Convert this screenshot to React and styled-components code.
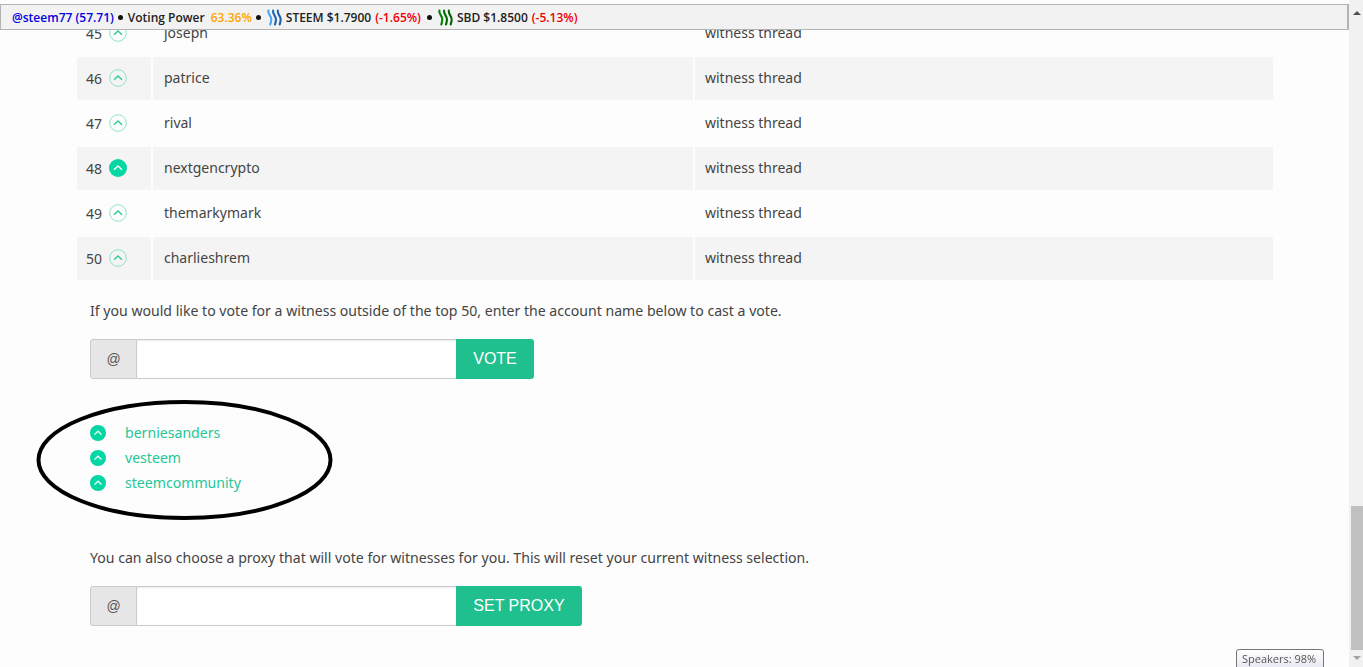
import React from 'react';
import styled, { createGlobalStyle } from 'styled-components';

const GlobalStyle = createGlobalStyle`
  html, body {
    margin: 0;
    padding: 0;
    height: 100%;
    overflow: hidden;
    background: #fdfdfd;
  }
  body {
    font-family: 'Noto Sans', 'Open Sans', Arial, sans-serif;
    color: #444;
  }
`;

const Page = styled.div`
  width: 1349px;
  height: 667px;
  overflow: hidden;
  padding-top: 10px;
  box-sizing: border-box;
`;

const Table = styled.table`
  margin-left: 75px;
  width: 1200px;
  border-collapse: separate;
  border-spacing: 2px;
  table-layout: fixed;
  font-size: 14px;
`;

const Row = styled.tr`
  background: none;
`;

const Cell = styled.td`
  height: 43px;
  padding: 0 0 3px 10px;
  box-sizing: border-box;
  background: ${p => (p.$odd ? '#f4f4f4' : 'transparent')};
`;

const RankCell = styled(Cell)`
  width: 74px;
  padding-left: 9px;
`;

const NameCell = styled(Cell)`
  width: 540px;
  padding-left: 11px;
`;

const Rank = styled.span`
  display: inline-flex;
  align-items: center;
  gap: 7px;
  position: relative;
  top: 1px;
`;

const Content = styled.div`
  margin-left: 90px;
`;

const Note = styled.p`
  margin: 0;
  font-size: 14.1px;
  line-height: 22px;
  color: #444;
`;

const VoteNote = styled(Note)`
  margin-top: 18px;
`;

const ProxyNote = styled(Note)`
  margin-top: 52px;
`;

const InputGroup = styled.div`
  display: flex;
  height: 40px;
  margin-top: 17px;
`;

const Addon = styled.div`
  width: 47px;
  box-sizing: border-box;
  display: flex;
  align-items: center;
  justify-content: center;
  background: #e6e6e6;
  border: 1px solid #cacaca;
  border-radius: 3px 0 0 3px;
  font-family: 'Liberation Sans', Arial, sans-serif;
  font-size: 14px;
  color: #555;
`;

const Field = styled.input`
  width: 319px;
  box-sizing: border-box;
  background: #fff;
  border: 1px solid #cacaca;
  border-left: 0;
  border-right: 0;
  box-shadow: inset 0 1px 2px rgba(0, 0, 0, 0.08);
  outline: none;
`;

const Submit = styled.button`
  height: 40px;
  width: ${p => p.$width}px;
  padding: 0;
  border: 0;
  border-radius: 0 3px 3px 0;
  background: #1fc08e;
  color: #fff;
  font-family: 'Liberation Sans', Arial, sans-serif;
  font-size: 16px;
`;

const Chosen = styled.div`
  position: relative;
  margin-top: 41px;
  display: flex;
  flex-direction: column;
`;

const Ellipse = styled.svg`
  position: absolute;
  left: -55px;
  top: -21px;
`;

const ChosenRow = styled.div`
  display: flex;
  align-items: center;
  gap: 19px;
  height: 25px;
  font-size: 14.1px;
  color: #24c795;
`;

const TopBar = styled.div`
  position: fixed;
  left: 0;
  top: 4px;
  width: 1349px;
  height: 26px;
  box-sizing: border-box;
  display: flex;
  align-items: center;
  padding-left: 11px;
  background: #f2f2f2;
  border: 1px solid #b3b3b3;
  border-width: 1px 2px 1px 1px;
  font-family: 'Open Sans', Arial, sans-serif;
  font-size: 12px;
  font-weight: 600;
  color: #222;
  white-space: pre;
`;

const Tone = styled.span`
  color: ${p => p.$color};
  margin-left: ${p => p.$gap || 0}px;
`;

const Dot = styled.span`
  width: 5px;
  height: 5px;
  margin: 1px 5px 0 ${p => p.$left || 4}px;
  border-radius: 50%;
  background: #111;
`;

const Coin = styled.svg`
  margin: 0 3px 0 1px;
`;

const Scrollbar = styled.div`
  position: fixed;
  right: 0;
  top: 0;
  bottom: 0;
  width: 14px;
  background: #f1f1f1;
`;

const Thumb = styled.div`
  position: absolute;
  left: 2px;
  right: 0;
  top: 506px;
  height: 144px;
  background: #c0c0c0;
`;

const Arrow = styled.div`
  position: absolute;
  left: 4px;
  ${p => (p.$down ? 'bottom: 7px;' : 'top: 11px;')}
  width: 0;
  height: 0;
  border-left: 4px solid transparent;
  border-right: 4px solid transparent;
  ${p => (p.$down ? 'border-top: 4px solid #a3a3a3;' : 'border-bottom: 4px solid #505050;')}
`;

const Tooltip = styled.div`
  position: fixed;
  left: 1236px;
  top: 649px;
  width: 88px;
  height: 22px;
  box-sizing: border-box;
  padding-left: 5px;
  border: 1px solid #767676;
  border-radius: 3px;
  background: linear-gradient(#fff, #e4e5f0);
  font-family: 'Open Sans', Arial, sans-serif;
  font-size: 11px;
  line-height: 17px;
  color: #575757;
`;

const VoteIcon = ({ filled, size = 18 }) => (
  <svg width={size} height={size} viewBox="0 0 18 18">
    <circle
      cx="9"
      cy="9"
      r={filled ? 9 : 8.3}
      fill={filled ? '#04d6a4' : 'none'}
      stroke={filled ? 'none' : '#8fe3c8'}
    />
    <path
      d="M5 10.8 L9 7 L13 10.8"
      fill="none"
      stroke={filled ? '#fff' : '#2ec99a'}
      strokeWidth="1.4"
    />
  </svg>
);

const CoinIcon = ({ color, light }) => (
  <Coin width="16" height="17" viewBox="0 0 17 17">
    {[1, 6, 11].map(x => (
      <path
        key={x}
        d={`M${x + 0.5} 1 C${x - 0.5} 5 ${x + 4} 7 ${x + 3.5} 10.5 C${x + 3.5} 12.5 ${x + 3} 14 ${x + 2.5} 16`}
        fill="none"
        stroke={x === 1 ? light : color}
        strokeWidth="2.2"
        strokeLinecap="round"
      />
    ))}
  </Coin>
);

const witnesses = [
  { rank: 45, name: 'joseph' },
  { rank: 46, name: 'patrice' },
  { rank: 47, name: 'rival' },
  { rank: 48, name: 'nextgencrypto', voted: true },
  { rank: 49, name: 'themarkymark' },
  { rank: 50, name: 'charlieshrem' },
];

const chosen = ['berniesanders', 'vesteem', 'steemcommunity'];

export default function App() {
  return (
    <>
      <GlobalStyle />
      <Page>
        <Table>
          <tbody>
            {witnesses.map((w, i) => (
              <Row key={w.rank}>
                <RankCell $odd={i % 2 === 1}>
                  <Rank>
                    {w.rank} <VoteIcon filled={w.voted} />
                  </Rank>
                </RankCell>
                <NameCell $odd={i % 2 === 1}>{w.name}</NameCell>
                <Cell $odd={i % 2 === 1}>witness thread</Cell>
              </Row>
            ))}
          </tbody>
        </Table>
        <Content>
          <VoteNote>
            If you would like to vote for a witness outside of the top 50, enter the account name below to cast a vote.
          </VoteNote>
          <InputGroup>
            <Addon>@</Addon>
            <Field />
            <Submit $width={78}>VOTE</Submit>
          </InputGroup>
          <Chosen>
            <Ellipse width="300" height="125" viewBox="0 0 300 125">
              <ellipse cx="149.5" cy="61" rx="146" ry="58" fill="none" stroke="#000" strokeWidth="4" />
            </Ellipse>
            {chosen.map(name => (
              <ChosenRow key={name}>
                <VoteIcon filled size={16} />
                {name}
              </ChosenRow>
            ))}
          </Chosen>
          <ProxyNote>
            You can also choose a proxy that will vote for witnesses for you. This will reset your current witness selection.
          </ProxyNote>
          <InputGroup>
            <Addon>@</Addon>
            <Field />
            <Submit $width={126}>SET PROXY</Submit>
          </InputGroup>
        </Content>
      </Page>
      <TopBar>
        <Tone $color="#0000e0">@steem77 (57.71)</Tone>
        <Dot />
        Voting Power
        <Tone $color="#ffa500" $gap={6}>63.36%</Tone>
        <Dot />
        <CoinIcon color="#1a5fb0" light="#4ba2f2" />
        STEEM $1.7900
        <Tone $color="#f00000" $gap={4}>(-1.65%)</Tone>
        <Dot $left={6} />
        <CoinIcon color="#006400" light="#008000" />
        SBD $1.8500
        <Tone $color="#f00000" $gap={4}>(-5.13%)</Tone>
      </TopBar>
      <Scrollbar>
        <Arrow />
        <Thumb />
        <Arrow $down />
      </Scrollbar>
      <Tooltip>Speakers: 98%</Tooltip>
    </>
  );
}
